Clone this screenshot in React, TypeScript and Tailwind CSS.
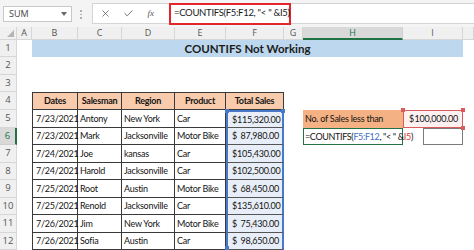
import React from "react";
import { X, Check } from "lucide-react";

type Row = [string, string, string, string, string];
const rows: Row[] = [
  ["7/23/2021", "Antony", "New York", "Car", "115,320.00"],
  ["7/23/2021", "Mark", "Jacksonville", "Motor Bike", "87,980.00"],
  ["7/24/2021", "Joe", "kansas", "Car", "105,430.00"],
  ["7/24/2021", "Harold", "Jacksonville", "Car", "102,500.00"],
  ["7/25/2021", "Root", "Austin", "Motor Bike", "68,450.00"],
  ["7/25/2021", "Renold", "Jacksonville", "Car", "135,610.00"],
  ["7/26/2021", "Jim", "New York", "Motor Bike", "75,430.00"],
  ["7/26/2021", "Sofia", "Austin", "Car", "98,650.00"],
];

const colLetters = ["A", "B", "C", "D", "E", "F", "G", "H", "I", ""];

function RowHdr({ n, active }: { n: number; active?: boolean }) {
  return (
    <div
      className={
        active
          ? "bg-[#d9d9d9] border-b border-[#cfcfcf] border-r-2 border-r-[#217346] text-[#217346] text-[9.5px] tracking-normal flex items-center justify-center font-['Open_Sans',sans-serif]"
          : "bg-[#f0f0f0] border-b border-r border-[#d6d6d6] text-[#555] text-[9.5px] tracking-normal flex items-center justify-center font-['Open_Sans',sans-serif]"
      }
    >
      {n}
    </div>
  );
}

const tb = "border-[#3a3a3a]";

export default function App() {
  return (
    <div className="w-[474px] h-[250px] overflow-hidden bg-white font-['Lato',sans-serif] text-[#141414]">
      {/* toolbar */}
      <div className="h-[27px] bg-[#f4f4f4] flex items-start">
        <div className="ml-[3px] mt-[6px] w-[69px] h-[16px] bg-white border border-[#c8c8c8] flex items-center justify-between pl-[5px] pr-[4px] font-['Open_Sans',sans-serif] text-[9px] text-[#444]">
          <span>SUM</span>
          <svg width="6" height="4" viewBox="0 0 6 4">
            <path d="M0 0h6L3 4z" fill="#666" />
          </svg>
        </div>
        <div className="ml-[8px] mt-[10px] flex flex-col gap-[2px]">
          <span className="block w-[1.5px] h-[1.5px] bg-[#b0b0b0]" />
          <span className="block w-[1.5px] h-[1.5px] bg-[#b0b0b0]" />
          <span className="block w-[1.5px] h-[1.5px] bg-[#b0b0b0]" />
        </div>
        <div className="ml-[10px] mt-[3px] flex-1 h-[21px] bg-white border border-[#d4d4d4] border-r-0 flex items-center">
          <X size={11} strokeWidth={1.6} className="ml-[7px] text-[#555]" />
          <Check size={11} strokeWidth={1.8} className="ml-[12px] text-[#555]" />
          <span className="ml-[14px] italic text-[9px] text-[#555] font-['Liberation_Serif',serif]">fx</span>
          <div className="ml-[15px] h-[22px] -my-[1px] w-[122px] border-2 border-[#e3262b] flex items-center pl-[3px] text-[9.5px] tracking-[-0.3px] text-[#1a1a1a] whitespace-nowrap">
            =COUNTIFS(F5:F12, "&lt; " &amp;I5)
          </div>
        </div>
      </div>

      {/* grid */}
      <div className="grid grid-cols-[17px_15px_46px_44px_53px_51px_58px_19px_100px_60px_11px] grid-rows-[13px_17px_18px_17px_18px_17.5px_17.5px_17.5px_17.5px_17.5px_17.5px_17.5px_17.5px] text-[9px] tracking-[-0.25px]">
        {/* column headers */}
        <div className="bg-[#f0f0f0] border-r border-b border-[#d6d6d6] flex items-end justify-end p-[2px]">
          <svg width="7" height="7" viewBox="0 0 7 7">
            <path d="M7 0V7H0z" fill="#b5b5b5" />
          </svg>
        </div>
        {colLetters.map((c, i) =>
          c === "H" ? (
            <div
              key={i}
              className="bg-[#d9d9d9] border-r border-[#cfcfcf] border-b-2 border-b-[#217346] text-[#217346] text-[9px] tracking-normal flex items-center justify-center font-['Open_Sans',sans-serif]"
            >
              {c}
            </div>
          ) : (
            <div
              key={i}
              className="bg-[#f0f0f0] border-r border-b border-[#d6d6d6] text-[#555] text-[9px] tracking-normal flex items-center justify-center font-['Open_Sans',sans-serif]"
            >
              {c}
            </div>
          )
        )}

        {/* row 1 */}
        <RowHdr n={1} />
        <div />
        <div className="col-span-8 bg-[#bdd7ee] flex items-center justify-center font-bold text-[11.5px] tracking-normal text-[#1c1c1c]">
          COUNTIFS Not Working
        </div>
        <div />

        {/* row 2,3 */}
        <RowHdr n={2} />
        <div className="col-span-10" />
        <RowHdr n={3} />
        <div className="col-span-10" />

        {/* row 4 header */}
        <RowHdr n={4} />
        <div />
        {["Dates", "Salesman", "Region", "Product", "Total Sales"].map((h, i) => (
          <div
            key={h}
            className={`bg-[#f8cbad] border-t border-r border-b ${tb} ${
              i === 0 ? "border-l" : ""
            } flex items-center justify-center font-bold text-[9px]`}
          >
            {h}
          </div>
        ))}
        <div />
        <div />
        <div />
        <div />

        {/* data rows */}
        {rows.map((r, idx) => {
          const n = idx + 5;
          const first = idx === 0;
          return (
            <React.Fragment key={n}>
              <RowHdr n={n} active={n === 6} />
              <div />
              <div className={`border-l border-r border-b ${tb} flex items-center pl-[3px] whitespace-nowrap`}>
                {r[0]}
              </div>
              <div className={`border-r border-b ${tb} flex items-center pl-[2px] whitespace-nowrap`}>{r[1]}</div>
              <div className={`border-r border-b ${tb} flex items-center pl-[2px] whitespace-nowrap`}>{r[2]}</div>
              <div className={`border-r border-b ${tb} flex items-center pl-[2px] whitespace-nowrap`}>{r[3]}</div>
              <div
                className={`relative bg-[#e8eef7] border-b border-b-[#555] border-l-2 border-r-2 border-l-[#4a78c8] border-r-[#4a78c8] ${
                  first ? "border-t-2 border-t-[#4a78c8]" : ""
                } flex items-center justify-between pl-[4px] pr-[3px] whitespace-nowrap`}
              >
                <span>$</span>
                <span>{r[4]}</span>
                {first && (
                  <>
                    <span className="absolute -left-[3px] -top-[3px] w-[4px] h-[4px] bg-[#4a78c8]" />
                    <span className="absolute -right-[3px] -top-[3px] w-[4px] h-[4px] bg-[#4a78c8]" />
                  </>
                )}
                {n === 12 && (
                  <span className="absolute -left-[3px] -bottom-[1px] w-[4px] h-[4px] bg-[#4a78c8]" />
                )}
              </div>
              <div />
              {n === 5 ? (
                <div className="bg-[#f4b183] flex items-center pl-[2px] whitespace-nowrap">
                  No. of Sales less than
                </div>
              ) : n === 6 ? (
                <div className="relative z-10 border-[1.5px] border-[#217346] flex items-center pl-[1px] whitespace-nowrap overflow-visible">
                  <span className="tracking-[-0.35px]">
                    =COUNTIFS(<span className="text-[#3d6fc4]">F5:F12</span>, "&lt; " &amp;
                    <span className="text-[#d03a3a]">I5</span>)
                  </span>
                </div>
              ) : (
                <div />
              )}
              {n === 5 ? (
                <div className="relative bg-[#fcf0f0] border-[1.5px] border-[#d95b5b] flex items-center justify-between pl-[5px] pr-[4px] whitespace-nowrap">
                  <span>$</span>
                  <span>100,000.00</span>
                  <span className="absolute -left-[3px] -top-[3px] w-[4px] h-[4px] bg-[#d95b5b]" />
                  <span className="absolute -right-[3px] -top-[3px] w-[4px] h-[4px] bg-[#d95b5b]" />
                  <span className="absolute -right-[3px] -bottom-[3px] w-[4px] h-[4px] bg-[#d95b5b]" />
                </div>
              ) : n === 6 ? (
                <div className="flex">
                  <div className="ml-[20px] flex-1 border border-[#7a7a7a]" />
                </div>
              ) : (
                <div />
              )}
              <div />
            </React.Fragment>
          );
        })}
      </div>
    </div>
  );
}
